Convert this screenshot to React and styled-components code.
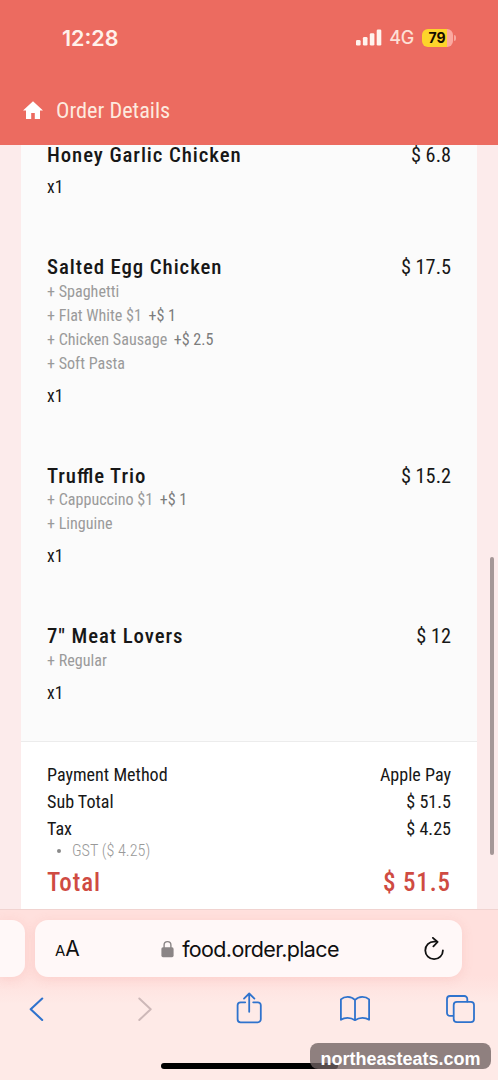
import React from "react";
import styled, { createGlobalStyle, css } from "styled-components";

const items = [
  { name: "Honey Garlic Chicken", price: "$ 6.8", options: [] },
  {
    name: "Salted Egg Chicken",
    price: "$ 17.5",
    options: [
      { label: "+ Spaghetti" },
      { label: "+ Flat White $1", extra: "+$ 1" },
      { label: "+ Chicken Sausage", extra: "+$ 2.5" },
      { label: "+ Soft Pasta" },
    ],
  },
  {
    name: "Truffle Trio",
    price: "$ 15.2",
    options: [
      { label: "+ Cappuccino $1", extra: "+$ 1" },
      { label: "+ Linguine" },
    ],
  },
  { name: '7" Meat Lovers', price: "$ 12", options: [{ label: "+ Regular" }] },
];

const payment = [
  { label: "Payment Method", value: "Apple Pay" },
  { label: "Sub Total", value: "$ 51.5" },
  { label: "Tax", value: "$ 4.25" },
];

const App = () => {
  return (
    <>
      <GlobalStyle />
      <Phone>
        <Header>
          <StatusBar>
            <Clock>12:28</Clock>
            <Signal viewBox="0 0 26 17">
              <rect x="0" y="11" width="4.6" height="5.5" rx="1.3" />
              <rect x="6.9" y="8" width="4.6" height="8.5" rx="1.3" />
              <rect x="13.8" y="4.3" width="4.6" height="12.2" rx="1.3" />
              <rect x="20.7" y="0.5" width="4.6" height="16" rx="1.3" />
            </Signal>
            <Network>4G</Network>
            <Battery>79</Battery>
            <BatteryTip />
          </StatusBar>
          <TitleBar>
            <HomeIcon viewBox="0 0 20 18">
              <path d="M10 0.3 0 9.4h3V18h5.2v-6h3.6v6H17V9.4h3z" />
            </HomeIcon>
            <Title>Order Details</Title>
          </TitleBar>
        </Header>

        <Content>
          <Card>
            <ItemList>
              {items.map((item) => (
                <Item key={item.name}>
                  <ItemHead>
                    <ItemName>{item.name}</ItemName>
                    <ItemPrice>{item.price}</ItemPrice>
                  </ItemHead>
                  {item.options.map((option) => (
                    <Option key={option.label}>
                      {option.label}
                      {option.extra && <Extra>{option.extra}</Extra>}
                    </Option>
                  ))}
                  <Quantity>x1</Quantity>
                </Item>
              ))}
            </ItemList>
            <Summary>
              {payment.map((row) => (
                <SummaryRow key={row.label}>
                  <span>{row.label}</span>
                  <span>{row.value}</span>
                </SummaryRow>
              ))}
              <TaxDetail>
                <Dot />
                GST ($ 4.25)
              </TaxDetail>
              <TotalRow>
                <span>Total</span>
                <span>$ 51.5</span>
              </TotalRow>
            </Summary>
          </Card>
          <ScrollThumb />
        </Content>

        <BrowserBar>
          <AddressRow>
            <PreviousTab />
            <AddressField>
              <TextSize>
                <small>A</small>A
              </TextSize>
              <Address>
                <LockIcon viewBox="0 0 13 18">
                  <path d="M3.1 8V5a3.4 3.4 0 0 1 6.8 0v3" fill="none" stroke="#8b8586" strokeWidth="1.4" />
                  <rect x="0.4" y="7.3" width="12.2" height="9.9" rx="1.6" fill="#8b8586" />
                </LockIcon>
                food.order.place
              </Address>
              <ReloadIcon viewBox="0 0 20 24">
                <path d="M12.2 4.6H10A8.8 8.8 0 1 0 18.9 13.4" />
                <path d="M8.9 0.9 13.6 5 9.4 9.4" />
              </ReloadIcon>
            </AddressField>
          </AddressRow>
          <Toolbar>
            <ToolIcon viewBox="0 0 30 34" $width={30}>
              <path d="M20.2 7.5 8.7 18.2 20.2 29" strokeWidth="2.1" />
            </ToolIcon>
            <ToolIcon viewBox="0 0 30 34" $width={30} $disabled>
              <path d="M11.3 7.5 22.7 18.2 11.3 29" strokeWidth="2" />
            </ToolIcon>
            <ToolIcon viewBox="0 0 30 34" $width={30}>
              <path d="M11.2 11.3H6.6a3 3 0 0 0-3 3v14a3 3 0 0 0 3 3h17.2a3 3 0 0 0 3-3v-14a3 3 0 0 0-3-3h-4.6" />
              <path d="M15.2 20.8V2.8M10 7.6l5.2-5.1 5.2 5.1" />
            </ToolIcon>
            <ToolIcon viewBox="0 0 34 34" $width={34}>
              <path d="M17 9C15.2 6.9 12.6 5.8 9.7 5.8c-2.7 0-5 .8-6.8 2.5v20.5c1.8-1.3 4.1-2 6.7-2 2.9 0 5.4 1 7.4 2.4 2-1.4 4.5-2.4 7.4-2.4 2.6 0 4.9.7 6.7 2V8.3c-1.8-1.7-4.1-2.5-6.8-2.5-2.9 0-5.5 1.1-7.3 3.2zM17 9v19.9" />
            </ToolIcon>
            <ToolIcon viewBox="0 0 34 34" $width={34}>
              <path d="M10 24.9H7a3 3 0 0 1-3-3V8a3 3 0 0 1 3-3h14.3a3 3 0 0 1 3 3v2.6" />
              <rect x="10.7" y="10.9" width="20.3" height="20.3" rx="3.2" />
            </ToolIcon>
          </Toolbar>
          <HomeIndicator />
          <Watermark>northeasteats.com</Watermark>
        </BrowserBar>
      </Phone>
    </>
  );
};
export default App;

const GlobalStyle = createGlobalStyle`
  * {
    box-sizing: border-box;
  }
  body {
    margin: 0;
  }
`;

const condensed = css`
  font-family: "Roboto Condensed", Roboto, sans-serif;
  font-stretch: 75%;
`;

const Phone = styled.div`
  display: flex;
  flex-direction: column;
  width: 498px;
  height: 1080px;
  overflow: hidden;
  background: #fcebeb;
  font-family: Inter, sans-serif;
`;

const Header = styled.header`
  flex: none;
  height: 145px;
  background: #ec6b60;
  color: #fff1ea;
`;

const StatusBar = styled.div`
  display: flex;
  align-items: center;
  height: 75px;
  padding: 0 42px 0 62px;
`;

const Clock = styled.div`
  flex: 1;
  font-size: 21.5px;
  font-weight: 600;
`;

const Signal = styled.svg`
  width: 26px;
  height: 17px;
  fill: #fff3ee;
`;

const Network = styled.div`
  margin-left: 7px;
  font-size: 18px;
  font-weight: 500;
  letter-spacing: -0.3px;
  color: #fde0d6;
`;

const Battery = styled.div`
  width: 31px;
  height: 18px;
  margin-left: 8px;
  padding-right: 1px;
  border-radius: 6px;
  background: linear-gradient(90deg, #fdd42b 25px, #fba9a0 25px);
  color: #160d00;
  font-size: 14px;
  font-weight: 700;
  line-height: 18px;
  text-align: center;
`;

const BatteryTip = styled.div`
  width: 2px;
  height: 6px;
  margin-left: 1px;
  border-radius: 0 2px 2px 0;
  background: #f7a79e;
`;

const TitleBar = styled.div`
  display: flex;
  align-items: center;
  height: 70px;
  padding-left: 23px;
`;

const HomeIcon = styled.svg`
  width: 20px;
  height: 18px;
  fill: #fff;
`;

const Title = styled.h1`
  ${condensed}
  margin: 0 0 0 13px;
  font-size: 22.3px;
  font-weight: 400;
  color: #fdeadf;
`;

const Content = styled.main`
  position: relative;
  flex: none;
  height: 764px;
  padding: 0 21px;
  overflow: hidden;
`;

const Card = styled.section`
  ${condensed}
  height: 100%;
  background: #fff;
  color: #171717;
`;

const ItemList = styled.div`
  height: 597px;
  padding: 0 26px;
  border-bottom: 1px solid #ececec;
  background: #fbfbfb;
  overflow: hidden;
`;

const Item = styled.article`
  margin-bottom: 56px;

  &:first-child {
    margin-top: -2.4px;
  }
`;

const ItemHead = styled.div`
  display: flex;
  justify-content: space-between;
  height: 24.6px;
  line-height: 24.6px;
`;

const ItemName = styled.div`
  font-size: 20.8px;
  font-weight: 500;
  letter-spacing: 0.92px;
  font-feature-settings: "liga" 1;
`;

const ItemPrice = styled.div`
  font-size: 20.3px;
`;

const Option = styled.div`
  height: 24px;
  font-size: 16.1px;
  line-height: 24px;
  color: #9a9a9a;
`;

const Extra = styled.span`
  margin-left: 6.5px;
  color: #7c7c7c;
`;

const Quantity = styled.div`
  height: 24px;
  margin-top: 8px;
  font-size: 17.5px;
  line-height: 25px;
`;

const Summary = styled.div`
  padding: 19px 26px 0;
`;

const SummaryRow = styled.div`
  display: flex;
  justify-content: space-between;
  height: 27px;
  font-size: 18.1px;
  line-height: 27px;
`;

const TaxDetail = styled.div`
  display: flex;
  align-items: center;
  height: 17px;
  padding-left: 10px;
  font-size: 16.2px;
  font-weight: 300;
  color: #999;
`;

const Dot = styled.i`
  width: 4px;
  height: 4px;
  margin-right: 11px;
  border-radius: 50%;
  background: #8a8a8a;
`;

const TotalRow = styled.div`
  display: flex;
  justify-content: space-between;
  margin-top: 9px;
  color: #cf4b42;
  font-size: 25px;
  font-weight: 500;
  line-height: 30px;
  letter-spacing: 0.9px;
`;

const ScrollThumb = styled.div`
  position: absolute;
  top: 412px;
  right: 4px;
  width: 4px;
  height: 298px;
  border-radius: 2px;
  background: #a59797;
`;

const BrowserBar = styled.footer`
  position: relative;
  flex: 1;
  border-top: 1px solid #f1d3d0;
  background: linear-gradient(#ffe0dd 0, #ffe0dd 66px, #feeae7 94px);
`;

const AddressRow = styled.div`
  display: flex;
  gap: 10px;
  padding-top: 10px;
`;

const PreviousTab = styled.div`
  width: 25px;
  height: 57px;
  border-radius: 0 13px 13px 0;
  background: #fff8f8;
  box-shadow: 0 2px 12px rgba(230, 120, 110, 0.16);
`;

const AddressField = styled.div`
  display: flex;
  align-items: center;
  justify-content: space-between;
  width: 427px;
  height: 57px;
  padding: 0 18px 0 20px;
  border-radius: 13px;
  background: #fff8f8;
  box-shadow: 0 2px 12px rgba(230, 120, 110, 0.16);
  color: #101010;
`;

const TextSize = styled.div`
  width: 25px;
  font-size: 21px;
  white-space: nowrap;

  small {
    font-size: 15px;
  }
`;

const Address = styled.div`
  display: flex;
  align-items: center;
  margin-right: 4px;
  font-size: 21.5px;
  letter-spacing: -0.65px;
`;

const LockIcon = styled.svg`
  width: 13px;
  height: 18px;
  margin-right: 8px;
`;

const ReloadIcon = styled.svg`
  width: 20px;
  height: 24px;
  fill: none;
  stroke: #111;
  stroke-width: 1.8;
  stroke-linecap: round;
  stroke-linejoin: round;
`;

const Toolbar = styled.nav`
  display: grid;
  grid-template-columns: repeat(5, 105.75px);
  justify-content: center;
  justify-items: center;
  padding: 14px 0.5px 0 0;
`;

const ToolIcon = styled.svg`
  width: ${({ $width }) => $width}px;
  height: 34px;
  fill: none;
  stroke: ${({ $disabled }) => ($disabled ? "#cdb8b8" : "#2f73cd")};
  stroke-width: 1.8;
  stroke-linecap: round;
  stroke-linejoin: round;
`;

const HomeIndicator = styled.div`
  width: 177px;
  height: 6px;
  margin: 38px auto 0;
  border-radius: 3px;
  background: #000;
`;

const Watermark = styled.div`
  position: absolute;
  right: 7px;
  bottom: 11px;
  width: 181px;
  height: 26px;
  border-radius: 8px;
  background: rgba(112, 98, 98, 0.78);
  color: #fff;
  font: bold 18px/33px "Liberation Sans", Arial, sans-serif;
  text-align: center;
`;
